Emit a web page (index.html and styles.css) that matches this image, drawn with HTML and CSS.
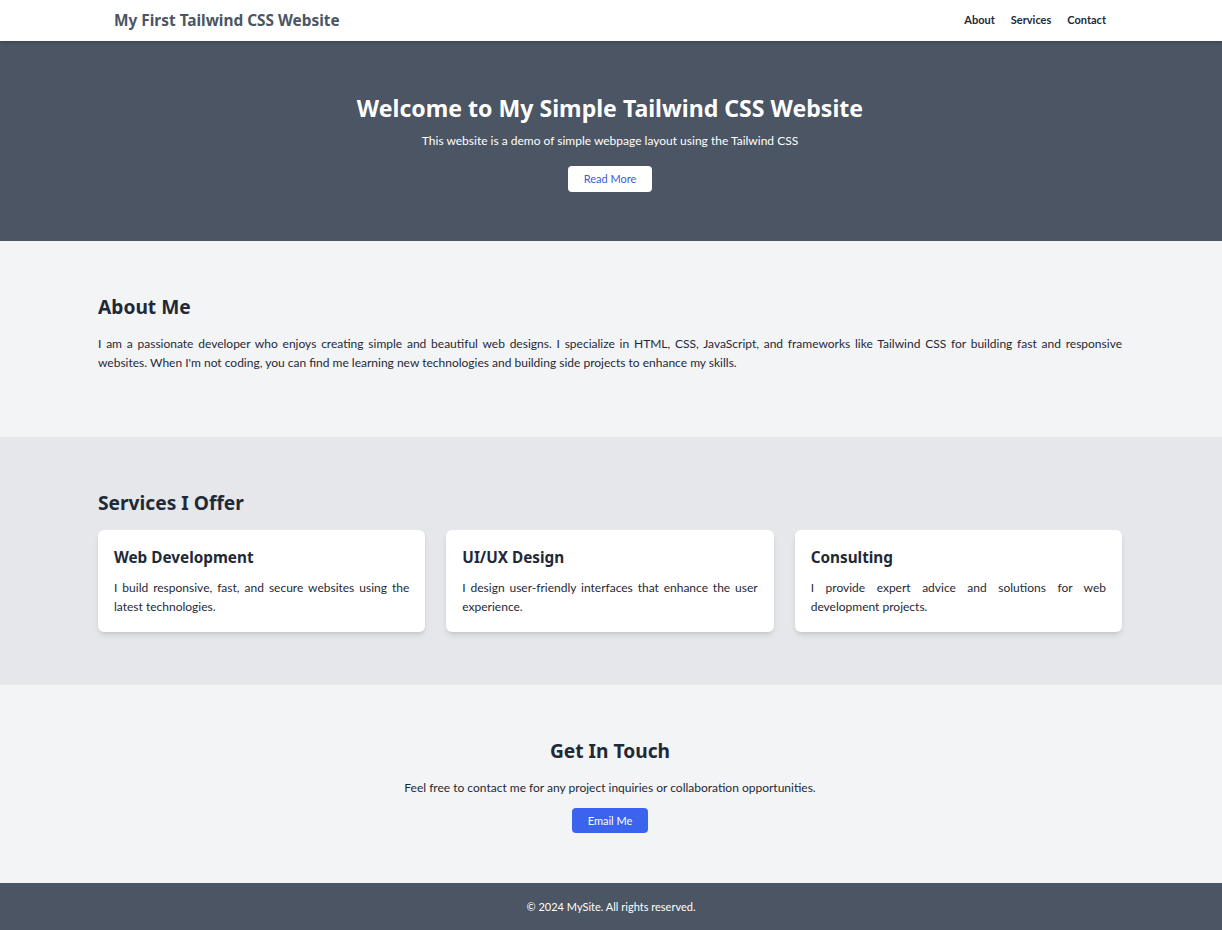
FILE: index.html
```html
<!DOCTYPE html>
<html lang="en">
<head>
<meta charset="utf-8">
<title>My First Tailwind CSS Website</title>
<link rel="stylesheet" href="styles.css">
</head>
<body>
<nav class="nav">
  <div class="nav-inner">
    <span class="brand">My First Tailwind CSS Website</span>
    <ul class="nav-links">
      <li><a href="#about">About</a></li>
      <li><a href="#services">Services</a></li>
      <li><a href="#contact">Contact</a></li>
    </ul>
  </div>
</nav>

<header class="hero">
  <h1 class="hero-title">Welcome to My Simple Tailwind CSS Website</h1>
  <p class="hero-sub">This website is a demo of simple webpage layout using the Tailwind CSS</p>
  <a class="btn-light" href="#about">Read More</a>
</header>

<section class="about" id="about">
  <div class="container">
    <h2 class="section-title">About Me</h2>
    <p class="about-text">I am a passionate developer who enjoys creating simple and beautiful web designs. I specialize in HTML, CSS, JavaScript, and frameworks like Tailwind CSS for building fast and responsive websites. When I'm not coding, you can find me learning new technologies and building side projects to enhance my skills.</p>
  </div>
</section>

<section class="services" id="services">
  <div class="container">
    <h2 class="section-title">Services I Offer</h2>
    <div class="cards">
      <div class="card">
        <h3 class="card-title">Web Development</h3>
        <p class="card-text">I build responsive, fast, and secure websites using the latest technologies.</p>
      </div>
      <div class="card">
        <h3 class="card-title">UI/UX Design</h3>
        <p class="card-text">I design user-friendly interfaces that enhance the user experience.</p>
      </div>
      <div class="card">
        <h3 class="card-title">Consulting</h3>
        <p class="card-text">I provide expert advice and solutions for web development projects.</p>
      </div>
    </div>
  </div>
</section>

<section class="contact" id="contact">
  <h2 class="section-title">Get In Touch</h2>
  <p class="contact-text">Feel free to contact me for any project inquiries or collaboration opportunities.</p>
  <a class="btn-blue" href="#contact">Email Me</a>
</section>

<footer class="footer">
  <p>© 2024 MySite. All rights reserved.</p>
</footer>
</body>
</html>
```

FILE: styles.css
```css
* { box-sizing: border-box; }
html, body { margin: 0; padding: 0; }
body {
  font-family: Lato, "Noto Sans", sans-serif;
  font-size: 12px;
  color: #1f2937;
  background: #f3f4f6;
}
h1, h2, h3, p, ul { margin: 0; padding: 0; }
a { text-decoration: none; }

.nav {
  position: relative;
  z-index: 2;
  background: #ffffff;
  height: 41px;
  box-shadow: 0 1px 3px rgba(0,0,0,0.25);
}
.nav-inner {
  width: 1024px;
  margin-left: calc((100% - 1024px) / 2 - 1px);
  padding: 0 16px;
  height: 100%;
  display: flex;
  align-items: center;
  justify-content: space-between;
}
.brand {
  font-family: "Noto Sans", sans-serif;
  font-size: 15.4px;
  font-weight: 700;
  color: #4b5563;
}
.nav-links {
  list-style: none;
  display: flex;
  gap: 16px;
  padding-bottom: 3px;
}
.nav-links a {
  font-size: 11px;
  font-weight: 700;
  color: #1f2937;
}

.hero {
  background: #4b5563;
  color: #ffffff;
  text-align: center;
  padding: 51px 2px 49px 0;
  height: 200px;
}
.hero-title {
  font-family: "Noto Sans", sans-serif;
  font-size: 23.1px;
  line-height: 32px;
  font-weight: 700;
}
.hero-sub {
  margin-top: 8px;
  font-size: 12px;
  line-height: 18px;
}
.btn-light {
  display: inline-block;
  margin-top: 16px;
  width: 84px;
  height: 26px;
  line-height: 26px;
  background: #ffffff;
  color: #3b5bdb;
  border-radius: 4px;
  font-size: 11px;
}

.container {
  width: 1024px;
  margin-left: calc((100% - 1024px) / 2 - 1px);
}
.section-title {
  font-family: "Noto Sans", sans-serif;
  font-size: 19.2px;
  line-height: 28px;
  font-weight: 700;
  color: #1f2937;
}

.about {
  background: #f3f4f6;
  height: 196px;
  padding-top: 52px;
}
.about-text {
  margin-top: 13px;
  line-height: 19px;
  text-align: justify;
}

.services {
  background: #e5e7eb;
  height: 248px;
  padding-top: 52px;
}
.cards {
  margin-top: 13px;
  display: grid;
  grid-template-columns: repeat(3, 1fr);
  gap: 21px;
}
.card {
  background: #ffffff;
  border-radius: 6px;
  padding: 16px;
  height: 102px;
  box-shadow: 0 4px 6px -1px rgba(0,0,0,0.1), 0 2px 4px -2px rgba(0,0,0,0.1);
}
.card-title {
  font-family: "Noto Sans", sans-serif;
  font-size: 15.3px;
  line-height: 22px;
  font-weight: 700;
}
.card-text {
  margin-top: 10px;
  line-height: 19px;
  text-align: justify;
}

.contact {
  background: #f3f4f6;
  height: 198px;
  padding: 52px 2px 0 0;
  text-align: center;
}
.contact-text {
  margin-top: 13px;
  line-height: 19px;
}
.btn-blue {
  display: inline-block;
  margin-top: 11px;
  width: 76px;
  height: 25px;
  line-height: 25px;
  background: #3b64ee;
  color: #ffffff;
  border-radius: 4px;
  font-size: 11px;
}

.footer {
  background: #4b5563;
  color: #ffffff;
  height: 47px;
  display: flex;
  align-items: center;
  justify-content: center;
  font-size: 11px;
}
```
